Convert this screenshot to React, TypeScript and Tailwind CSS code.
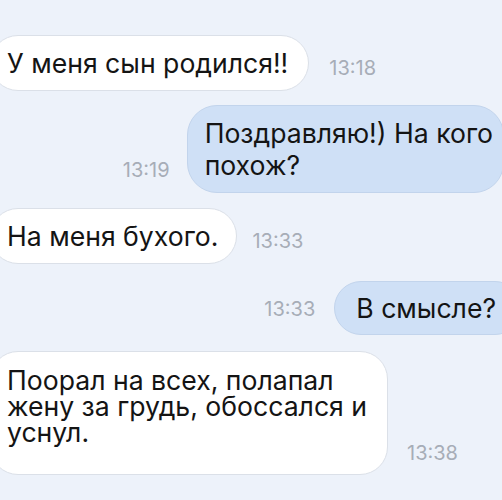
import React from "react";

const font = { fontFamily: "Inter, 'Liberation Sans', sans-serif" };

export default function App() {
  return (
    <div
      className="w-[502px] h-[500px] overflow-hidden bg-[#edf2fa] text-[#141414] flex flex-col pt-[35px]"
      style={font}
    >
      {/* Row 1 */}
      <div className="flex items-end">
        <div className="-ml-[10px] bg-white border border-[#dbe0e8] rounded-[28px] pl-[16px] pr-[20px] py-[12px] text-[26.6px] leading-[30px] whitespace-nowrap">
          У меня сын родился!!
        </div>
        <div className="ml-[20px] mb-[13px] text-[20px] leading-[20px] text-[#a7adb7]">13:18</div>
      </div>

      {/* Row 2 */}
      <div className="flex items-end justify-end mt-[14px] -mr-[2px]">
        <div className="mr-[17px] mb-[13px] text-[20px] leading-[20px] text-[#a7adb7]">13:19</div>
        <div className="bg-[#cfe0f6] border border-[#c2d4ec] rounded-[30px] pl-[17px] pr-[10px] py-[11px] text-[26.6px] leading-[32px] whitespace-nowrap">
          Поздравляю!) На кого
          <br />
          похож?
        </div>
      </div>

      {/* Row 3 */}
      <div className="flex items-end mt-[15px]">
        <div className="-ml-[10px] bg-white border border-[#dbe0e8] rounded-[28px] pl-[16px] pr-[18px] py-[12px] text-[26.6px] leading-[30px] whitespace-nowrap">
          На меня бухого.
        </div>
        <div className="ml-[15px] mb-[13px] text-[20px] leading-[20px] text-[#a7adb7]">13:33</div>
      </div>

      {/* Row 4 */}
      <div className="flex items-end justify-end mt-[17px] -mr-[20px]">
        <div className="mr-[19px] mb-[16px] text-[20px] leading-[20px] text-[#a7adb7]">13:33</div>
        <div className="bg-[#cfe0f6] border border-[#c2d4ec] rounded-[28px] pl-[21px] pr-[25px] py-[11px] text-[26.6px] leading-[30px] whitespace-nowrap">
          В смысле?
        </div>
      </div>

      {/* Row 5 */}
      <div className="flex items-end mt-[16px]">
        <div className="-ml-[10px] bg-white border border-[#dbe0e8] rounded-[28px] pl-[16px] pr-[20px] pt-[15px] pb-[29px] text-[26.6px] leading-[26px] whitespace-nowrap">
          Поорал на всех, полапал
          <br />
          жену за грудь, обоссался и
          <br />
          уснул.
        </div>
        <div className="ml-[19px] mb-[12px] text-[20px] leading-[20px] text-[#a7adb7]">13:38</div>
      </div>
    </div>
  );
}
